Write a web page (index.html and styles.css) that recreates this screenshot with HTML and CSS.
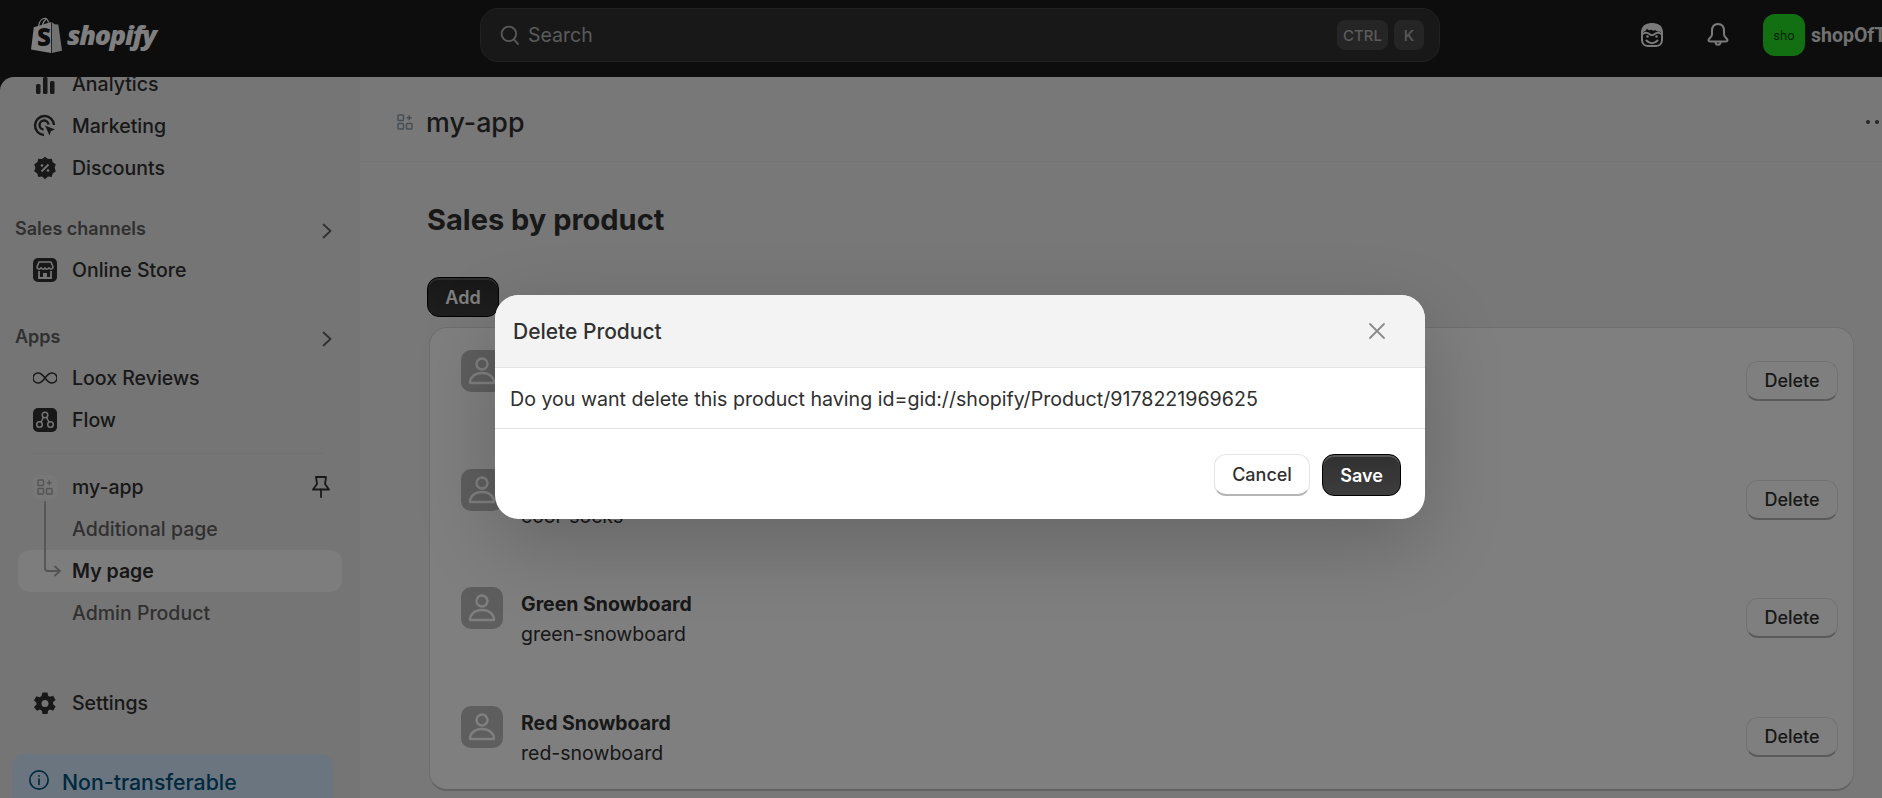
FILE: index.html
```html
<!DOCTYPE html>
<html lang="en">
<head>
    <meta charset="UTF-8">
    <title>my-app</title>
    <link rel="stylesheet" href="styles.css">
</head>
<body>
    <!-- top bar -->
    <header class="topbar">
        <div class="logo">
            <svg class="logo-bag" viewBox="0 0 32 36" width="32" height="36">
                <path d="M8.500 9.500C9 5 11.500 1.500 14.500 1.300c2-.1 3.500 1.500 4 4.300M12.500 8.500c.5-3 1.800-5 3.500-6" fill="none" stroke="#fff" stroke-width="1.300"/>
                <path d="M21 5l-1.500.5L3.800 10.300 1 32.500 21 36z" fill="#fff"/>
                <path d="M21.800 5l2.900 2.300 3.300.3c.2 0 .4.200.4.400L32 33.800 21.800 36z" fill="#e3e3e3"/>
                <text class="logo-s" x="7" y="29">S</text>
            </svg>
            <span class="logo-text">shopify</span>
        </div>
        <div class="search">
            <svg viewBox="0 0 20 20" width="22" height="22" fill="none" stroke="#b0b0b0" stroke-width="1.700" stroke-linecap="round"><circle cx="9" cy="9" r="6.600"/><path d="M13.500 13.800l3.800 4.400"/></svg>
            <span class="search-text">Search</span>
            <span class="kbd kbd-ctrl">CTRL</span>
            <span class="kbd kbd-k">K</span>
        </div>
        <div class="top-right">
            <svg class="top-icon face" viewBox="0 0 24 26" width="24" height="26" fill="none" stroke="#f5f5f5" stroke-width="2">
                <path d="M2 11C2 5 6 2 12 2s10 3 10 9v7c0 4-3 6-6 6H8c-3 0-6-2-6-6z"/>
                <path d="M2 10c3 0 4-1.500 5-3.500 1 2 3 2 4 1 1 1 3 1.500 4 .5 1 1 4 2 7 2 0-5-4-8.500-10-8.500S2 5 2 10z" fill="#f5f5f5" stroke="none"/>
                <path d="M2.500 12c2-1.500 5-1.500 7 0 1 1.500 4 1.500 5 0 2-1.500 5-1.500 7 0"/>
                <circle cx="7.500" cy="14.500" r="1.300" fill="#f5f5f5" stroke="none"/>
                <circle cx="16.500" cy="14.500" r="1.300" fill="#f5f5f5" stroke="none"/>
                <path d="M6.500 18.500c3 3.500 8 3.500 11 0" stroke-linecap="round"/>
            </svg>
            <svg class="top-icon bell" viewBox="0 0 24 26" width="24" height="26" fill="none" stroke="#f5f5f5" stroke-width="2" stroke-linejoin="round">
                <path d="M12 2C8 2 6 5 6 9v3.500c0 2.500-3.500 4-3.500 5.500 0 1 .8 1.500 2 1.500h15c1.200 0 2-.5 2-1.500 0-1.500-3.500-3-3.500-5.500V9c0-4-2-7-6-7z"/>
                <path d="M9.500 20c0 3.500 5 3.500 5 0"/>
            </svg>
            <div class="avatar">sho</div>
            <span class="shop-name">shopOfTheYear</span>
        </div>
    </header>

    <div class="shell">
        <!-- left nav -->
        <aside class="sidebar">
            <div class="nav-scroll">
                <a class="nav-item">
                    <span class="nav-icon"><svg viewBox="0 0 24 24" width="24" height="24" fill="#303030"><rect x="3" y="12" width="4.500" height="10" rx="1.500"/><rect x="10" y="5" width="4.500" height="17" rx="1.500"/><rect x="17" y="9" width="4.500" height="13" rx="1.500"/></svg></span>
                    Analytics
                </a>
                <a class="nav-item">
                    <span class="nav-icon"><svg viewBox="0 0 24 24" width="24" height="24" fill="none" stroke="#303030" stroke-width="2.500"><path d="M11 21a9.500 9.500 0 1 1 10-10"/><path d="M10.500 15.500a4.500 4.500 0 1 1 5-5"/><path d="M12 11.500l10 4-4 1.500-1.500 4.500z" fill="#303030" stroke="none"/></svg></span>
                    Marketing
                </a>
                <a class="nav-item">
                    <span class="nav-icon"><svg viewBox="0 0 24 24" width="24" height="24"><path d="M12 .8l3 2.200 3.700-.3 1 3.500 3.100 2-1.200 3.600 1.200 3.500-3.100 2.100-1 3.500-3.700-.3L12 23.200l-3-2.600-3.700.3-1-3.500-3.100-2.100 1.200-3.500-1.200-3.600 3.100-2 1-3.500L9 3z" fill="#303030"/><path d="M8.500 15.500l7-7" stroke="#ebebeb" stroke-width="1.800"/><circle cx="9" cy="9.500" r="1.300" fill="#ebebeb"/><circle cx="15" cy="14.500" r="1.300" fill="#ebebeb"/></svg></span>
                    Discounts
                </a>

                <div class="nav-head nav-head-first">
                    <span>Sales channels</span>
                    <svg viewBox="0 0 12 18" width="12" height="18" fill="none" stroke="#616161" stroke-width="1.800" stroke-linecap="round" stroke-linejoin="round"><path d="M2.500 2.500L9.500 9l-7 6.500"/></svg>
                </div>
                <a class="nav-item">
                    <span class="nav-icon"><svg viewBox="0 0 24 24" width="24" height="24"><rect width="24" height="24" rx="5" fill="#303030"/><path d="M6 4h12l2 5c0 2.500-3.200 2.700-4 .8-.8 1.800-3.300 1.800-4 0-.7 1.800-3.200 1.800-4 0-.8 1.900-4 1.700-4-.8z" fill="none" stroke="#ebebeb" stroke-width="1.600" stroke-linejoin="round"/><path d="M6 13v7h12v-7" fill="none" stroke="#ebebeb" stroke-width="1.800"/><rect x="10" y="15" width="4" height="5" fill="#ebebeb"/></svg></span>
                    Online Store
                </a>

                <div class="nav-head">
                    <span>Apps</span>
                    <svg viewBox="0 0 12 18" width="12" height="18" fill="none" stroke="#616161" stroke-width="1.800" stroke-linecap="round" stroke-linejoin="round"><path d="M2.500 2.500L9.500 9l-7 6.500"/></svg>
                </div>
                <a class="nav-item">
                    <span class="nav-icon"><svg viewBox="0 0 24 24" width="24" height="24" fill="none" stroke="#303030" stroke-width="1.500"><path d="M12 12c-2.500-3.500-4.500-5-7-5a5 5 0 0 0 0 10c2.500 0 4.500-1.500 7-5s4.500-5 7-5a5 5 0 0 1 0 10c-2.500 0-4.500-1.500-7-5z"/></svg></span>
                    Loox Reviews
                </a>
                <a class="nav-item">
                    <span class="nav-icon"><svg viewBox="0 0 24 24" width="24" height="24"><rect width="24" height="24" rx="5" fill="#303030"/><g fill="none" stroke="#ebebeb" stroke-width="1.500"><circle cx="12" cy="7" r="2.800"/><circle cx="6.500" cy="16.500" r="2.800"/><circle cx="17.500" cy="16.500" r="2.800"/><path d="M10.500 9.500l-2.500 4.500M13.500 9.500l2.500 4.500"/></g></svg></span>
                    Flow
                </a>
                <div class="nav-sep"></div>

                <a class="nav-item">
                    <span class="nav-icon app-tile"><svg viewBox="0 0 16 16" width="16" height="16" fill="none" stroke="#a8a8a8" stroke-width="1.400"><use href="#grid-plus"/></svg></span>
                    my-app
                    <svg class="pin" viewBox="0 0 20 24" width="20" height="24" fill="none" stroke="#303030" stroke-width="1.800" stroke-linejoin="round"><path d="M5 2h10l-1 7 4 5.500H2L6 9z"/><path d="M10 14.500V22" stroke-linecap="round"/></svg>
                </a>
                <a class="nav-item nav-sub">Additional page</a>
                <a class="nav-item nav-sub nav-current">
                    <svg class="tree" viewBox="0 0 24 24" width="24" height="24" fill="none" stroke="#a8a8a8" stroke-width="1.800" stroke-linecap="round" stroke-linejoin="round"><path d="M12-57V9c0 2 1 3 3 3h11M22 7.500l5 4.500-5 4.500"/></svg>
                    My page
                </a>
                <a class="nav-item nav-sub">Admin Product</a>

                <a class="nav-item nav-settings">
                    <span class="nav-icon"><svg viewBox="0 0 24 24" width="24" height="24"><path fill="#303030" fill-rule="evenodd" d="M9.500 1.500h5l.6 3.200 2 1.100 3-1.100 2.500 4.300-2.500 2.100v2.200l2.500 2.100-2.500 4.300-3-1.100-2 1.100-.6 3.200h-5l-.6-3.200-2-1.100-3 1.100L.9 15.900l2.500-2.100v-2.200L.9 9.500 3.400 5.200l3 1.100 2-1.100zM12 9a3.500 3.500 0 1 0 0 7 3.500 3.500 0 0 0 0-7z"/></svg></span>
                    Settings
                </a>

                <div class="plan-card">
                    <svg viewBox="0 0 24 24" width="22" height="22" fill="none" stroke="#00527c" stroke-width="1.800"><circle cx="12" cy="12" r="10"/><path d="M12 11v6" stroke-linecap="round"/><circle cx="12" cy="7.500" r="1" fill="#00527c" stroke="none"/></svg>
                    <span>Non-transferable</span>
                </div>
            </div>
        </aside>

        <!-- page content -->
        <main class="main">
            <div class="app-header">
                <span class="app-tile header-tile"><svg viewBox="0 0 16 16" width="16" height="16" fill="none" stroke="#8a9aa8" stroke-width="1.400">
                    <defs><g id="grid-plus"><rect x="1" y="1" width="5.500" height="5.500" rx=".8"/><rect x="1" y="9.500" width="5.500" height="5.500" rx=".8"/><rect x="9.500" y="9.500" width="5.500" height="5.500" rx=".8"/><path d="M12.200 1.200v5M9.700 3.700h5"/></g></defs>
                    <use href="#grid-plus"/></svg></span>
                <span class="app-title">my-app</span>
                <span class="dots"><i></i><i></i><i></i></span>
            </div>

            <div class="content">
                <h1 class="page-title">Sales by product</h1>
                <button class="btn btn-dark btn-add">Add</button>

                <div class="card">
                    <div class="row">
                        <span class="thumb"><svg viewBox="0 0 42 42" width="42" height="42" fill="none" stroke="#fff" stroke-width="2.400"><circle cx="21" cy="14" r="5.500"/><path d="M9 33c0-6 5-10 12-10s12 4 12 10z" stroke-linejoin="round"/></svg></span>
                        <div class="row-text"><b>Blue Snowboard</b><span>blue-snowboard</span></div>
                        <button class="btn btn-plain">Delete</button>
                    </div>
                    <div class="row">
                        <span class="thumb"><svg viewBox="0 0 42 42" width="42" height="42" fill="none" stroke="#fff" stroke-width="2.400"><circle cx="21" cy="14" r="5.500"/><path d="M9 33c0-6 5-10 12-10s12 4 12 10z" stroke-linejoin="round"/></svg></span>
                        <div class="row-text"><b>Cool Socks</b><span>cool-socks</span></div>
                        <button class="btn btn-plain">Delete</button>
                    </div>
                    <div class="row">
                        <span class="thumb"><svg viewBox="0 0 42 42" width="42" height="42" fill="none" stroke="#fff" stroke-width="2.400"><circle cx="21" cy="14" r="5.500"/><path d="M9 33c0-6 5-10 12-10s12 4 12 10z" stroke-linejoin="round"/></svg></span>
                        <div class="row-text"><b>Green Snowboard</b><span>green-snowboard</span></div>
                        <button class="btn btn-plain">Delete</button>
                    </div>
                    <div class="row">
                        <span class="thumb"><svg viewBox="0 0 42 42" width="42" height="42" fill="none" stroke="#fff" stroke-width="2.400"><circle cx="21" cy="14" r="5.500"/><path d="M9 33c0-6 5-10 12-10s12 4 12 10z" stroke-linejoin="round"/></svg></span>
                        <div class="row-text"><b>Red Snowboard</b><span>red-snowboard</span></div>
                        <button class="btn btn-plain">Delete</button>
                    </div>
                </div>
            </div>
        </main>
    </div>

    <!-- modal over everything -->
    <div class="overlay">
        <div class="modal">
            <div class="modal-head">
                <span class="modal-title">Delete Product</span>
                <svg viewBox="0 0 18 18" width="18" height="18" fill="none" stroke="#8a8a8a" stroke-width="1.800" stroke-linecap="round"><path d="M2 2l14 14M16 2L2 16"/></svg>
            </div>
            <div class="modal-body">Do you want delete this product having id=gid://shopify/Product/9178221969625</div>
            <div class="modal-foot">
                <button class="btn btn-plain btn-cancel">Cancel</button>
                <button class="btn btn-dark btn-save">Save</button>
            </div>
        </div>
    </div>
</body>
</html>
```

FILE: styles.css
```css
*{
    margin: 0;
    padding: 0;
    box-sizing: border-box;
}

body{
    width: 1882px;
    height: 798px;
    overflow: hidden;
    background-color: #1a1a1a;
    font-family: Inter, "Liberation Sans", sans-serif;
    font-size: 19.5px;
    color: #303030;
}

/* top bar */
.topbar{
    height: 77px;
    display: flex;
    align-items: center;
    background-color: #1a1a1a;
}

.logo{
    width: 480px;
    padding: 0 0 7px 30px;
    display: flex;
    align-items: center;
    gap: 5px;
}

.logo-s{
    font-family: "Open Sans", sans-serif;
    font-weight: 800;
    font-size: 24px;
    fill: #1a1a1a;
}

.logo-text{
    font-family: "Open Sans", sans-serif;
    font-style: italic;
    font-weight: 800;
    font-size: 27px;
    letter-spacing: -1.300px;
    color: #fff;
    margin-top: -1px;
}

.search{
    width: 960px;
    height: 54px;
    margin-top: -7px;
    padding: 0 15px 0 18px;
    display: flex;
    align-items: center;
    background-color: #303030;
    border: 1px solid #444;
    border-radius: 18px;
}

.search-text{
    flex: 1;
    margin-left: 7px;
    font-size: 19.5px;
    color: #b5b5b5;
}

.kbd{
    height: 30px;
    display: flex;
    align-items: center;
    justify-content: center;
    background-color: #4a4a4a;
    border-radius: 8px;
    font-size: 15px;
    font-weight: 500;
    color: #b5b5b5;
}

.kbd-ctrl{
    width: 51px;
}

.kbd-k{
    width: 30px;
    margin-left: 6px;
}

.top-right{
    flex: 1;
    min-width: 0;
    display: flex;
    align-items: center;
    overflow: hidden;
    margin-top: -7px;
}

.top-icon{
    flex-shrink: 0;
}

.face{
    margin-left: 200px;
}

.bell{
    margin-left: 42px;
}

.avatar{
    width: 42px;
    height: 42px;
    flex-shrink: 0;
    margin-left: 33px;
    display: flex;
    align-items: center;
    justify-content: center;
    background-color: #25e025;
    border-radius: 12px;
    font-family: Roboto, sans-serif;
    font-size: 13px;
    color: #0a4a0a;
}

.shop-name{
    flex-shrink: 0;
    margin-left: 6px;
    font-family: Roboto, sans-serif;
    font-weight: 700;
    font-size: 19.5px;
    color: #e3e3e3;
}

/* layout */
.shell{
    display: flex;
    height: 721px;
}

.sidebar{
    width: 360px;
    flex-shrink: 0;
    background-color: #ebebeb;
    border-top-left-radius: 14px;
    overflow: hidden;
}

.nav-scroll{
    margin-top: -14px;
    padding: 0 18px 0 12px;
}

.nav-item{
    height: 42px;
    padding-left: 6px;
    display: flex;
    align-items: center;
    font-weight: 500;
    color: #303030;
    border-radius: 12px;
}

.nav-icon{
    width: 24px;
    height: 24px;
    margin: 0 15px 0 15px;
    display: flex;
    align-items: center;
    justify-content: center;
}

.nav-head{
    height: 42px;
    margin-top: 24px;
    padding: 0 9px 0 3px;
    display: flex;
    align-items: center;
    justify-content: space-between;
    font-size: 18px;
    font-weight: 600;
    color: #616161;
}

.nav-head svg{
    margin-top: 5px;
}

.nav-head-first{
    margin-top: 18px;
}

.nav-sep{
    height: 1px;
    margin: 12px 18px 12px 18px;
    background-color: #e3e3e3;
}

.app-tile{
    display: flex;
    align-items: center;
    justify-content: center;
    background-color: #f1f1f1;
    border-radius: 6px;
}

.pin{
    margin-left: auto;
    margin-right: 11px;
}

.nav-sub{
    padding-left: 60px;
    color: #616161;
}

.nav-current{
    margin-left: 6px;
    color: #303030;
    background-color: #fafafa;
    font-weight: 600;
    padding-left: 15px;
}

.tree{
    overflow: visible;
    flex-shrink: 0;
    margin-right: 15px;
}

.nav-settings{
    margin-top: 48px;
}

.plan-card{
    height: 60px;
    width: 321px;
    margin-top: 30px;
    padding: 15px 0 0 16px;
    display: flex;
    align-items: flex-start;
    gap: 12px;
    background-color: #d5ebff;
    border-radius: 12px;
    font-size: 21.300px;
    font-weight: 500;
    color: #00527c;
}

/* main */
.main{
    flex: 1;
    min-width: 0;
    background-color: #f1f1f1;
    overflow: hidden;
}

.app-header{
    height: 85px;
    padding: 5px 0 0 30px;
    display: flex;
    align-items: center;
    border-bottom: 1px solid #ebebeb;
}

.header-tile{
    width: 30px;
    height: 30px;
}

.app-title{
    margin-left: 6px;
    font-size: 26.800px;
    font-weight: 500;
    color: #303030;
}

.dots{
    margin-left: auto;
    margin-right: -6px;
    display: flex;
    gap: 5px;
}

.dots i{
    width: 4px;
    height: 4px;
    border-radius: 50%;
    background-color: #4a4a4a;
}

.content{
    padding: 36px 0 0 67px;
    width: 1494px;
}

.page-title{
    height: 49px;
    font-size: 29px;
    line-height: 44px;
    font-weight: 700;
    color: #303030;
}

.btn{
    height: 40px;
    border-radius: 12px;
    font-family: inherit;
    font-size: 18px;
    font-weight: 600;
}

.btn-dark{
    color: #fff;
    background: linear-gradient(#303030, #3d3d3d);
    border: 1px solid #000;
    box-shadow: inset 0 2px 0 rgba(255,255,255,.2);
}

.btn-add{
    display: block;
    width: 72px;
    margin-top: 30px;
}

.btn-plain{
    color: #303030;
    background-color: #fff;
    border: 1px solid #e3e3e3;
    border-bottom: 2px solid #b5b5b5;
    font-weight: 500;
}

.card{
    margin-top: 10px;
    margin-left: 2px;
    padding: 22px 15px 21px 31px;
    display: flex;
    flex-direction: column;
    gap: 56.670px;
    background-color: #fff;
    border: 1px solid #dcdcdc;
    border-bottom: 2px solid #c4c4c4;
    border-radius: 18px;
}

.row{
    display: flex;
    align-items: center;
}

.row .btn-plain{
    width: 92px;
    margin-left: auto;
}

.thumb{
    width: 42px;
    height: 42px;
    flex-shrink: 0;
    align-self: flex-start;
    background-color: #bcbcbc;
    border-radius: 10px;
}

.row-text{
    margin-left: 18px;
    padding-top: 2px;
    display: flex;
    flex-direction: column;
    line-height: 30px;
}

.row-text b{
    font-weight: 700;
    font-size: 19.5px;
}

.row-text span{
    font-weight: 400;
}

/* modal */
.overlay{
    position: absolute;
    top: 0;
    left: 0;
    width: 1882px;
    height: 798px;
    padding: 295px 0 0 495px;
    background-color: rgba(0,0,0,.5);
}

.modal{
    width: 930px;
    height: 224px;
    background-color: #fff;
    border-radius: 24px;
    overflow: hidden;
    box-shadow: 0 26px 80px rgba(0,0,0,.2);
}

.modal-head{
    height: 73px;
    padding: 0 39px 0 18px;
    display: flex;
    align-items: center;
    justify-content: space-between;
    background-color: #f3f3f3;
    border-bottom: 1px solid #e3e3e3;
}

.modal-title{
    font-size: 21px;
    font-weight: 550;
    color: #303030;
}

.modal-body{
    height: 61px;
    padding: 1px 0 0 15px;
    display: flex;
    align-items: center;
    font-size: 19.630px;
    border-bottom: 1px solid #e3e3e3;
}

.modal-foot{
    height: 90px;
    padding: 25px 24px 0 0;
    display: flex;
    justify-content: flex-end;
    gap: 12px;
}

.btn-cancel{
    width: 96px;
    height: 42px;
}

.btn-save{
    width: 79px;
    height: 42px;
}
```
